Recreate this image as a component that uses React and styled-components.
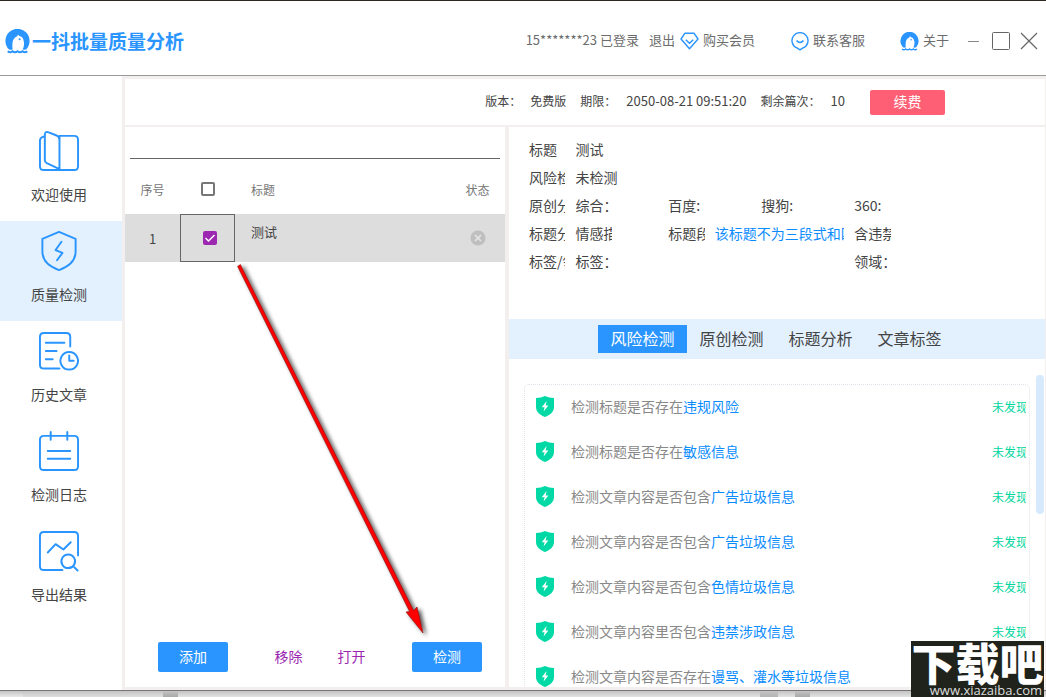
import React, { useState } from "react";
import styled, { createGlobalStyle, css } from "styled-components";

const BLUE = "#2a95ff";

const GlobalStyle = createGlobalStyle`
  * {
    box-sizing: border-box;
  }
  body {
    margin: 0;
    color: #444;
    font-family: "Noto Sans CJK SC", sans-serif;
    font-size: 14px;
    font-weight: 400;
  }
  button,
  input {
    font: inherit;
    color: inherit;
    margin: 0;
    padding: 0;
    border: 0;
    background: none;
  }
  a {
    color: inherit;
    text-decoration: none;
  }
`;

const Page = styled.div`
  position: relative;
  display: flex;
  flex-direction: column;
  height: 100vh;
  overflow: hidden;
  background: #fff;
  border-top: 1px solid #2c2620;
`;

const Header = styled.header`
  display: flex;
  align-items: center;
  height: 75px;
  flex-shrink: 0;
  padding: 6px 8px 0 5px;
  border-bottom: 1px solid #999;
  color: #6c6c6c;
  font-size: 13px;
  line-height: 18px;
`;

const Brand = styled.h1`
  display: flex;
  align-items: center;
  gap: 2px;
  margin: 0 auto 0 0;
  color: ${BLUE};
  font-size: 19px;
  line-height: 24px;
  font-weight: 700;
`;

const Account = styled.span`
  padding-bottom: 2px;
  margin-right: 10px;
`;

const HeaderLink = styled.a`
  display: flex;
  align-items: center;
  gap: 4px;
  margin-right: ${({ space }) => space}px;
`;

const LinkText = styled.span`
  padding-bottom: 2px;
`;

const WindowButton = styled.button`
  display: flex;
  margin-left: ${({ space }) => space}px;
`;

const Body = styled.div`
  display: flex;
  flex: 1;
  min-height: 0;
`;

const Sidebar = styled.nav`
  display: flex;
  flex-direction: column;
  width: 122px;
  flex-shrink: 0;
  padding-top: 45px;
`;

const NavItem = styled.a`
  display: flex;
  flex-direction: column;
  align-items: center;
  gap: 9px;
  height: 100px;
  padding: 8px 4px 0 0;
  line-height: 24px;
  background: ${({ $active }) => ($active ? "#e3f1ff" : "transparent")};
`;

const Main = styled.main`
  display: flex;
  flex-direction: column;
  gap: 2px;
  flex: 1;
  min-width: 0;
  padding: 3px 1px 3px 3px;
  background: #f3efef;
`;

const InfoBar = styled.section`
  display: flex;
  align-items: center;
  justify-content: flex-end;
  height: 46px;
  flex-shrink: 0;
  padding-right: 100px;
  background: #fff;
  font-size: 12px;
  line-height: 18px;
`;

const InfoItem = styled.span`
  display: flex;
  align-items: center;
  gap: ${({ gap }) => gap}px;
  margin-right: 14px;
  padding-bottom: 2px;
`;

const Digits = styled.span`
  font-size: 13px;
`;

const RenewButton = styled.button`
  width: 75px;
  height: 25px;
  margin-left: 11px;
  padding-bottom: 2px;
  border-radius: 2px;
  background: #ff5f74;
  color: #fff;
  font-size: 14px;
`;

const Columns = styled.div`
  display: grid;
  grid-template-columns: 95fr 134fr;
  gap: 4px;
  flex: 1;
  min-height: 0;
`;

const Panel = styled.section`
  display: flex;
  flex-direction: column;
  min-width: 0;
  min-height: 0;
  background: #fff;
`;

const SearchInput = styled.input`
  height: 32px;
  margin: 0 5px;
  flex-shrink: 0;
  border-bottom: 1px solid #666;
  outline: none;
`;

const Table = styled.table`
  width: 100%;
  table-layout: fixed;
  border-collapse: collapse;
`;

const HeadCell = styled.th`
  width: ${({ width }) => width};
  height: 55px;
  padding: ${({ align }) => (align === "left" ? "5px 0 0 16px" : "5px 0 0")};
  text-align: ${({ align }) => align || "center"};
  color: #757575;
  font-size: 12px;
  font-weight: 400;
`;

const Cell = styled.td`
  height: 48px;
  padding: ${({ align }) => (align === "left" ? "0 0 14px 16px" : "0")};
  text-align: ${({ align }) => align || "center"};
  background: #ddd;
  font-size: 13px;
  ${({ $focused }) =>
    $focused &&
    css`
      outline: 1px solid #666;
      outline-offset: -1px;
      padding-left: 4px;
    `}
`;

const CheckBox = styled.input`
  appearance: none;
  display: block;
  width: 14px;
  height: 14px;
  margin: 0 auto;
  border: 2px solid #777;
  border-radius: 2px;
  &:checked {
    border-color: #9c27b0;
    background: #9c27b0
      url("data:image/svg+xml,%3Csvg xmlns='http://www.w3.org/2000/svg' viewBox='0 0 10 10'%3E%3Cpath d='M.5 5l3 3 6-6' fill='none' stroke='white' stroke-width='1.4'/%3E%3C/svg%3E");
  }
`;

const Actions = styled.div`
  display: flex;
  align-items: center;
  justify-content: space-between;
  margin-top: auto;
  padding: 0 23px 15px 33px;
`;

const PrimaryButton = styled.button`
  width: 70px;
  height: 30px;
  padding-bottom: 2px;
  border-radius: 2px;
  background: ${BLUE};
  color: #fff;
`;

const TextActions = styled.div`
  display: flex;
  gap: 35px;
  padding-bottom: 2px;
`;

const TextButton = styled.button`
  color: #9c27b0;
`;

const Details = styled.dl`
  display: grid;
  grid-template-columns: repeat(11, 1fr);
  grid-auto-rows: 28px;
  height: 192px;
  flex-shrink: 0;
  margin: 0;
  padding: 8px 5px 0 20px;
  line-height: 28px;
`;

const Term = styled.dt`
  grid-column: ${({ col }) => col};
  margin-right: 10px;
  overflow: hidden;
  white-space: nowrap;
`;

const Value = styled.dd`
  grid-column: ${({ col }) => col} / span ${({ span }) => span || 1};
  margin: 0 10px 0 0;
  overflow: hidden;
  white-space: nowrap;
  color: ${({ $blue }) => ($blue ? "#0a8cff" : "inherit")};
`;

const Tabs = styled.div`
  display: flex;
  align-items: center;
  justify-content: center;
  height: 40px;
  flex-shrink: 0;
  padding-right: 2px;
  background: #e3f1ff;
`;

const Tab = styled.button`
  width: 89px;
  height: 28px;
  padding-bottom: 2px;
  font-size: 16px;
  line-height: 26px;
  background: ${({ $active }) => ($active ? BLUE : "transparent")};
  color: ${({ $active }) => ($active ? "#fff" : "inherit")};
`;

const Results = styled.div`
  display: flex;
  flex: 1;
  min-height: 0;
  overflow: hidden;
  padding: 16px 1px 0 15px;
`;

const CheckList = styled.ul`
  flex: 1;
  align-self: flex-start;
  margin: 9px 6px 0 0;
  padding: 0 3px 0 11px;
  border: 1px dotted #dfe2ea;
  border-radius: 5px;
  list-style: none;
`;

const CheckItem = styled.li`
  display: flex;
  align-items: center;
  height: 45px;
  padding-bottom: 2px;
  color: #888;
`;

const CheckText = styled.span`
  flex: 1;
  margin-left: 17px;
  padding-bottom: 2px;
`;

const Keyword = styled.a`
  color: #0a8cff;
`;

const Status = styled.span`
  width: 34px;
  overflow: hidden;
  white-space: nowrap;
  color: #00d6a0;
  font-size: 12px;
`;

const Thumb = styled.div`
  width: 8px;
  height: 139px;
  border-radius: 4px;
  background: #d6e9fd;
`;

const Desktop = styled.footer`
  display: grid;
  grid-template-columns: 23px 140px 15px 1fr 18px 17px 15px 236px;
  height: 7px;
  flex-shrink: 0;
  border-top: 1px solid #777;
`;

const DesktopPart = styled.div`
  background: linear-gradient(#c4c4c4, ${({ tone }) => tone});
`;

const ArrowOverlay = styled.svg`
  position: absolute;
  left: 230px;
  top: 255px;
  pointer-events: none;
`;

const Watermark = styled.div`
  position: absolute;
  right: 2px;
  bottom: 0;
  width: 133px;
  height: 56px;
  overflow: hidden;
  background: #20231c;
  color: #fff;
  text-align: center;
`;

const WatermarkName = styled.div`
  font-size: 44px;
  line-height: 42px;
  font-weight: 900;
  white-space: nowrap;
`;

const WatermarkUrl = styled.div`
  padding-right: 2px;
  text-align: right;
  font-family: "Open Sans", sans-serif;
  font-size: 13px;
  line-height: 14px;
  color: #ddd;
`;

const LogoIcon = ({ size }) => (
  <svg width={size} height={size} viewBox="0 0 24 24">
    <path
      fill={BLUE}
      d="M3.6 19.4A11.6 11.6 0 1 1 20.4 19.4Q18.6 20.6 17 19.4Q18.6 16.6 18.2 12.6C17.8 8.6 16 6.6 13.6 6.6L12.6 5.2L11.8 7C8.4 8.4 7.4 11 7.2 14Q6.8 17 7.4 19.4Q5.4 20.6 3.6 19.4Z"
    />
    <circle cx="14" cy="9.8" r="1" fill={BLUE} />
    <path
      d="M2.6 21.4q2.3 2 4.6 0q2.4 2 4.8 0q2.4 2 4.8 0q2.3 2 4.6 0"
      fill="none"
      stroke={BLUE}
      strokeWidth="1.8"
    />
  </svg>
);

const DiamondIcon = () => (
  <svg width="19" height="18" viewBox="0 0 19 18" fill="none" stroke={BLUE}>
    <path
      d="M5 1.2h9L18 7 9.5 16.8 1 7Z"
      strokeWidth="1.4"
      strokeLinejoin="round"
    />
    <path d="M5.8 7.8 9.5 11.2 13.2 7.8" strokeWidth="1.5" />
  </svg>
);

const ServiceIcon = () => (
  <svg width="18" height="19" viewBox="0 0 18 19" fill="none" stroke={BLUE}>
    <path
      d="M9 17.8 6.4 16.2A8 8 0 1 1 11.6 16.2Z"
      strokeWidth="1.4"
      strokeLinejoin="round"
    />
    <path d="M5.6 8.4Q9 12.6 12.4 8.4" strokeWidth="1.6" />
  </svg>
);

const NAV_PATHS = {
  book: "M6 6H4Q1 7 1 10V36Q1 40 5 40H36Q40 40 40 36V9Q40 5 36 5H21M21 6V39L8 33Q6 32 6 30V4Q6 0 10 1.4L18 4.6Q21 6 21 9",
  shield:
    "M20.5 1 37.5 8V21Q37.5 34 20.5 40Q3.5 34 3.5 21V8ZM23 11 17 19.5 24 22.5 18.5 30",
  history:
    "M21 38.5H5Q1 38.5 1 34.5V6Q1 2 5 2H28Q32 2 32 6V16M7 12H26M7 20.5H18M7 29H14M31 30.5H35.5M31 30.5V25M31 21.5A9 9 0 1 1 30.9 21.5Z",
  log: "M5 5H36Q40 5 40 9V36Q40 40 36 40H5Q1 40 1 36V9Q1 5 5 5ZM12 1V9M29 1V9M9 20.5H32M9 28.5H32",
  export:
    "M24 40H5Q1 40 1 36V5Q1 1 5 1H36Q40 1 40 5V25M9 22 17 13.5 25 19 32.5 11.5M30 24A7 7 0 1 1 29.9 24ZM35 36 39.5 40.5",
};

const NavIcon = ({ name }) => (
  <svg
    width="42"
    height="44"
    viewBox="-1 -2 43 45"
    fill="none"
    stroke={BLUE}
    strokeWidth="2"
    strokeLinejoin="round"
    strokeLinecap="round"
  >
    <path d={NAV_PATHS[name]} />
  </svg>
);

const SafeIcon = () => (
  <svg width="18" height="21" viewBox="0 0 18 21">
    <path
      fill="#00d9a5"
      d="M9 0Q13 2 18 2V11C18 16 14 19 9 21C4 19 0 16 0 11V2Q5 2 9 0Z"
    />
    <path fill="#fff" d="M10.6 5 5.8 11.2H8.6L7.6 15.6 12.4 9.4H9.6Z" />
  </svg>
);

const StatusIcon = styled.svg`
  display: block;
  margin: 0 auto;
`;

const PendingIcon = () => (
  <StatusIcon width="16" height="16" viewBox="0 0 16 16">
    <circle cx="8" cy="8" r="7.6" fill="#bfbfbf" />
    <path d="M5 5 11 11M11 5 5 11" stroke="#e6e6e6" strokeWidth="1.6" />
  </StatusIcon>
);

const NAV = [
  ["book", "欢迎使用"],
  ["shield", "质量检测"],
  ["history", "历史文章"],
  ["log", "检测日志"],
  ["export", "导出结果"],
];

const TABS = ["风险检测", "原创检测", "标题分析", "文章标签"];

const CHECKS = [
  ["检测标题是否存在", "违规风险"],
  ["检测标题是否存在", "敏感信息"],
  ["检测文章内容是否包含", "广告垃圾信息"],
  ["检测文章内容是否包含", "广告垃圾信息"],
  ["检测文章内容是否包含", "色情垃圾信息"],
  ["检测文章内容里否包含", "违禁涉政信息"],
  ["检测文章内容是否存在", "谩骂、灌水等垃圾信息"],
];

const TopBar = () => (
  <Header>
    <Brand>
      <LogoIcon size={25} />
      一抖批量质量分析
    </Brand>
    <Account>15*******23 已登录</Account>
    <HeaderLink href="#logout" space={5}>
      <LinkText>退出</LinkText>
    </HeaderLink>
    <HeaderLink href="#vip" space={36}>
      <DiamondIcon />
      <LinkText>购买会员</LinkText>
    </HeaderLink>
    <HeaderLink href="#service" space={35}>
      <ServiceIcon />
      <LinkText>联系客服</LinkText>
    </HeaderLink>
    <HeaderLink href="#about" space={0}>
      <LogoIcon size={19} />
      <LinkText>关于</LinkText>
    </HeaderLink>
    <WindowButton space={19} aria-label="最小化">
      <svg width="11" height="18" stroke="#888">
        <path d="M0 9.5H11" />
      </svg>
    </WindowButton>
    <WindowButton space={13} aria-label="最大化">
      <svg width="18" height="18" fill="none" stroke="#666">
        <rect x="0.5" y="0.5" width="17" height="17" rx="1" />
      </svg>
    </WindowButton>
    <WindowButton space={10} aria-label="关闭">
      <svg width="18" height="18" stroke="#666" strokeWidth="1.2">
        <path d="M1 1 17 17M17 1 1 17" />
      </svg>
    </WindowButton>
  </Header>
);

const TaskPanel = () => {
  const [all, setAll] = useState(false);
  const [checked, setChecked] = useState(true);

  return (
    <Panel>
      <SearchInput aria-label="搜索" />
      <Table>
        <thead>
          <tr>
            <HeadCell width="55px">序号</HeadCell>
            <HeadCell width="55px">
              <CheckBox
                type="checkbox"
                aria-label="全选"
                checked={all}
                onChange={() => setAll(!all)}
              />
            </HeadCell>
            <HeadCell align="left">标题</HeadCell>
            <HeadCell width="55px">状态</HeadCell>
          </tr>
        </thead>
        <tbody>
          <tr>
            <Cell>1</Cell>
            <Cell $focused>
              <CheckBox
                type="checkbox"
                aria-label="选择测试"
                checked={checked}
                onChange={() => setChecked(!checked)}
              />
            </Cell>
            <Cell align="left">测试</Cell>
            <Cell>
              <PendingIcon />
            </Cell>
          </tr>
        </tbody>
      </Table>
      <Actions>
        <PrimaryButton>添加</PrimaryButton>
        <TextActions>
          <TextButton>移除</TextButton>
          <TextButton>打开</TextButton>
        </TextActions>
        <PrimaryButton>检测</PrimaryButton>
      </Actions>
    </Panel>
  );
};

const ResultPanel = () => {
  const [tab, setTab] = useState(TABS[0]);

  return (
    <Panel>
      <Details>
        <Term col={1}>标题</Term>
        <Value col={2} span={10}>测试</Value>
        <Term col={1}>风险检测</Term>
        <Value col={2} span={10}>未检测</Value>
        <Term col={1}>原创分析</Term>
        <Value col={2}>综合：</Value>
        <Value col={4}>百度:</Value>
        <Value col={6}>搜狗:</Value>
        <Value col={8}>360:</Value>
        <Term col={1}>标题分析</Term>
        <Value col={2}>情感描述</Value>
        <Value col={4}>标题段式</Value>
        <Value col={5} span={3} $blue>该标题不为三段式和四段式</Value>
        <Value col={8}>含违禁词</Value>
        <Term col={1}>标签/领域</Term>
        <Value col={2}>标签：</Value>
        <Value col={8}>领域：</Value>
      </Details>
      <Tabs role="tablist">
        {TABS.map((name) => (
          <Tab
            key={name}
            role="tab"
            aria-selected={tab === name}
            $active={tab === name}
            onClick={() => setTab(name)}
          >
            {name}
          </Tab>
        ))}
      </Tabs>
      <Results>
        <CheckList>
          {CHECKS.map(([text, keyword], i) => (
            <CheckItem key={i}>
              <SafeIcon />
              <CheckText>
                {text}
                <Keyword href="#keyword">{keyword}</Keyword>
              </CheckText>
              <Status>未发现</Status>
            </CheckItem>
          ))}
        </CheckList>
        <Thumb />
      </Results>
    </Panel>
  );
};

const Arrow = () => (
  <ArrowOverlay width="210" height="390" viewBox="230 256 210 390">
    <defs>
      <filter id="arrow-shadow" x="-20%" y="-20%" width="140%" height="140%">
        <feDropShadow dx="3" dy="2" stdDeviation="2" floodOpacity="0.7" />
      </filter>
    </defs>
    <g filter="url(#arrow-shadow)" fill="#f00" stroke="#7a1010" strokeWidth="0.6">
      <path d="M237.6 266.4 240.4 264.6 413.6 610.6 417 607 423 633 406 612 409.6 611.6Z" />
    </g>
  </ArrowOverlay>
);

const App = () => (
  <Page>
    <GlobalStyle />
    <TopBar />
    <Body>
      <Sidebar>
        {NAV.map(([icon, label]) => (
          <NavItem key={icon} href={`#${icon}`} $active={icon === "shield"}>
            <NavIcon name={icon} />
            {label}
          </NavItem>
        ))}
      </Sidebar>
      <Main>
        <InfoBar>
          <InfoItem gap={9}>
            <span>版本：</span>
            <span>免费版</span>
          </InfoItem>
          <InfoItem gap={10}>
            <span>期限：</span>
            <Digits>2050-08-21 09:51:20</Digits>
          </InfoItem>
          <InfoItem gap={10}>
            <span>剩余篇次：</span>
            <Digits>10</Digits>
          </InfoItem>
          <RenewButton>续费</RenewButton>
        </InfoBar>
        <Columns>
          <TaskPanel />
          <ResultPanel />
        </Columns>
      </Main>
    </Body>
    <Desktop>
      <DesktopPart tone="#e8e8e8" />
      <DesktopPart tone="#dedede" />
      <DesktopPart tone="#a8a8a8" />
      <DesktopPart tone="#e2e2e2" />
      <DesktopPart tone="#b4b4b4" />
      <DesktopPart tone="#e2e2e2" />
      <DesktopPart tone="#a8a8a8" />
      <DesktopPart tone="#e2e2e2" />
    </Desktop>
    <Arrow />
    <Watermark>
      <WatermarkName>下载吧</WatermarkName>
      <WatermarkUrl>www.xiazaiba.com</WatermarkUrl>
    </Watermark>
  </Page>
);

export default App;
